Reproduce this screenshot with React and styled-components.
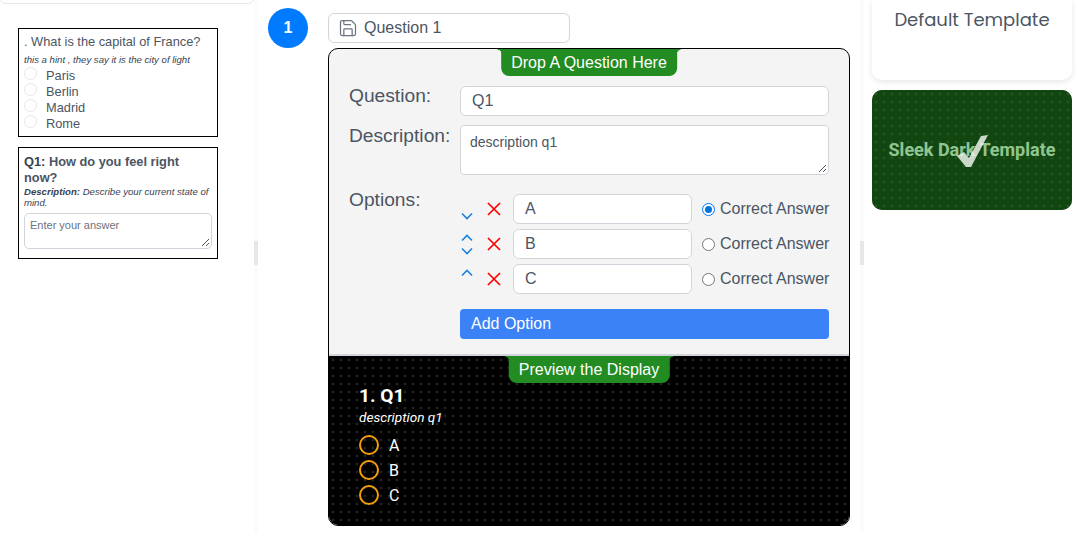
import React from "react";
import styled, { createGlobalStyle } from "styled-components";
import { Save } from "lucide-react";

const Global = createGlobalStyle`
  html, body { margin: 0; padding: 0; height: 533px; overflow: hidden; background: #fff; }
  * { box-sizing: border-box; }
  body { font-family: "Liberation Sans", Arial, sans-serif; color: #4b5563; }
`;
const Page = styled.div`
  display: grid; grid-template-columns: 254px 4px 602px 4px 217px; width: 1081px; height: 533px; overflow: hidden;
`;
const Left = styled.aside`
  padding: 28px 0 0 18px; display: flex; flex-direction: column; gap: 10px; position: relative;
  &::before { content: ""; position: absolute; left: 0; top: -7px; width: 252px; height: 9px; border: 1px solid #e5e7eb; border-radius: 6px; }
`;
const Gutter = styled.div`
  background: #fafbfd; padding-top: 241px;
  &::after { content: ""; display: block; width: 100%; height: 24px; background: #e5e7eb; }
`;
const PreviewCard = styled.section`
  width: 200px; border: 1px solid #000; padding: 5px 5px ${p => p.$bottom || 5}px; color: #4b5563; overflow: hidden;
`;
const QTitle = styled.div`
  font-size: 12.8px; line-height: 16px; color: #4b5563;
  ${p => p.$bold ? "font-weight: 700; margin-top: 1px; padding-right: 12px;" : ""}
`;
const Strong = styled.b`font-weight: 700; color: ${p => p.$dark ? "#374151" : "inherit"};`;
const Hint = styled.div`font-size: 9.6px; line-height: 11px; font-style: italic; color: #374151; margin: ${p => p.$flush ? 0 : "4px 0 2px"};`;
const PRow = styled.label`display: flex; align-items: center; height: 16px; font-size: 12.8px;`;
const PRadio = styled.span`width: 13px; height: 13px; border-radius: 50%; background: #fff; border: 1px solid #e5e7eb; margin-right: 9px; margin-top: -3px;`;
const PreviewTextarea = styled.div`
  height: 36px; margin-top: 5px; border: 1px solid #d1d5db; border-radius: 5px; font-size: 11px; padding: 5px; line-height: 13px; position: relative; color: #6b7280;
`;
const Grip = styled.svg`position: absolute; right: 1px; bottom: 1px; width: 9px; height: 9px;`;
const Resize = () => <Grip viewBox="0 0 9 9"><path d="M1 8 8 1M5 8 8 5" stroke="#555" strokeWidth="1" fill="none" /></Grip>;

const Center = styled.main`padding: 13px 0 0 10px; display: flex; gap: 20px; align-items: flex-start;`;
const Badge = styled.div`
  width: 40px; height: 40px; margin-top: -5px; flex: none; border-radius: 50%; background: #007bff; color: #fff; font-weight: 700; font-size: 16px; display: flex; align-items: center; justify-content: center;
`;
const Col = styled.div`width: 522px; display: flex; flex-direction: column; gap: 5px;`;
const NameBar = styled.div`
  width: 242px; height: 30px; border: 1px solid #d1d5db; border-radius: 6px; display: flex; align-items: center; gap: 6px; padding-left: 9px; font-size: 16px; color: #4b5563; background: #fff;
  svg { color: #6b7280; }
`;
const Editor = styled.div`
  width: 522px; height: 478px; border: 1px solid #000; border-radius: 10px; overflow: hidden; display: flex; flex-direction: column; background: #f4f4f4;
`;
const Form = styled.div`height: 307px; position: relative; padding: 37px 20px 0 20px; display: flex; flex-direction: column; border-bottom: 2px solid #d1d5db;`;
const Tab = styled.div`
  position: absolute; top: 0; left: 50%; transform: translateX(-50%); height: 27px; padding: 0 10px; background: #228b22; color: #fff; font-family: "Liberation Sans", Arial, sans-serif; font-size: 16px; display: flex; align-items: center; white-space: nowrap; border-radius: 0 0 8px 8px;
  &::before, &::after { content: ""; position: absolute; top: 0; width: 6px; height: 6px; }
  &::before { left: -5px; background: radial-gradient(circle at 0 100%, transparent 5.5px, #228b22 6px); }
  &::after { right: -5px; background: radial-gradient(circle at 100% 100%, transparent 5.5px, #228b22 6px); }
`;
const FieldRow = styled.div`display: grid; grid-template-columns: 111px 1fr; align-items: start; margin-top: ${p => p.$gap || 0}px;`;
const Label = styled.div`font-size: 19.2px; line-height: 20px; color: #4b5563; padding-top: ${p => p.$top || 0}px; white-space: nowrap;`;
const TextInput = styled.div`
  height: 30px; border: 1px solid #d1d5db; border-radius: 6px; background: #fff; font-size: 16px; display: flex; align-items: center; padding-left: 11px; color: #4b5563;
`;
const TextArea = styled.div`
  height: 50px; border: 1px solid #d1d5db; border-radius: 4px; background: #fff; font-size: 14px; line-height: 16px; padding: 8px 9px; position: relative; color: #4b5563;
`;
const Options = styled.div`display: flex; flex-direction: column; gap: 5px; padding-top: 9px;`;
const OptionRow = styled.div`display: flex; align-items: center; height: 30px;`;
const Arrows = styled.div`
  width: 14px; padding-left: 1px; margin-right: 13px; height: 26px; display: flex; flex-direction: column; justify-content: ${p => p.$only === "down" ? "flex-end" : "space-between"}; color: #1a82dc;
`;
const Slot = styled.svg`display: block; width: 12px; height: 8px; margin: 2.5px 0; fill: none; stroke: currentColor; stroke-width: 1.6;`;
const Chevron = ({ up }) => <Slot viewBox="0 0 12 8"><path d={up ? "M1 6.5 6 1.5 11 6.5" : "M1 1.5 6 6.5 11 1.5"} /></Slot>;
const Del = styled.svg`width: 14px; height: 14px; margin-right: 12px; flex: none; fill: none; stroke: #f00; stroke-width: 1.7;`;
const OptInput = styled(TextInput)`width: 179px; margin-right: 10px;`;
const Correct = styled.label`display: flex; align-items: center; font-size: 16px; color: #4b5563; white-space: nowrap; gap: 5px;`;
const Radio = styled.span`
  width: 13px; height: 13px; border-radius: 50%; border: 1px solid ${p => p.$on ? "#0075ff" : "#767676"}; background: #fff; display: flex; align-items: center; justify-content: center; margin-top: 1px;
  &::after { content: ""; width: 7px; height: 7px; border-radius: 50%; background: ${p => p.$on ? "#0075d9" : "transparent"}; }
`;
const AddBtn = styled.div`
  height: 30px; margin: 15px 0 0 111px; background: #3b82f6; border-radius: 4px; color: #fff; font-size: 16px; display: flex; align-items: center; padding-left: 11px;
`;
const dots = "radial-gradient(circle, rgba(255,255,255,.13) 1.3px, transparent 1.7px)";
const Dark = styled.div`
  flex: 1; position: relative; background-color: #000; background-image: ${dots}; background-size: 8px 8px; padding: 29px 30px 0; color: #fff; font-family: Roboto, sans-serif;
`;
const DarkTitle = styled.div`font-size: 19.2px; line-height: 22px; font-weight: 700; color: #fff;`;
const DarkDesc = styled.div`font-size: 13.6px; line-height: 16px; font-style: italic; margin-top: 2px; color: #fff;`;
const DarkList = styled.div`display: flex; flex-direction: column; gap: 5px; margin-top: 10px;`;
const DarkOption = styled.div`display: flex; align-items: center; gap: 10px; font-size: 16px; height: 20px;`;
const Ring = styled.span`width: 20px; height: 20px; border-radius: 50%; border: 2px solid #f59e0b;`;

const Right = styled.aside`padding-left: 8px; display: flex; flex-direction: column; gap: 10px;`;
const Template = styled.div`
  width: 200px; height: 80px; border-radius: 0 0 10px 10px; background: #fff; box-shadow: 0 2px 6px rgba(0,0,0,.1); font-family: Poppins, "Open Sans", sans-serif; font-size: 18px; color: #4b5563; text-align: center; padding-top: 6px; line-height: 27px;
`;
const DarkTemplate = styled.div`
  position: relative; width: 200px; height: 120px; padding-bottom: 2px; border-radius: 10px; background-color: #000; background-image: ${dots}; background-size: 8px 8px; display: flex; align-items: center; justify-content: center; font: 700 18px Roboto, sans-serif; color: #fff; overflow: hidden;
  &::after { content: ""; position: absolute; inset: 0; background: rgba(34,139,34,.5); }
`;
const Tick = styled.svg`position: absolute; left: 85px; top: 45px; width: 31px; height: 32px; z-index: 2;`;

const opts = [
  { t: "A", down: true, on: true },
  { t: "B", down: true, up: true },
  { t: "C", up: true },
];

export default function App() {
  return (
    <Page>
      <Global />
      <Left>
        <PreviewCard>
          <QTitle>. What is the capital of France?</QTitle>
          <Hint>this a hint , they say it is the city of light</Hint>
          {["Paris", "Berlin", "Madrid", "Rome"].map(o => <PRow key={o}><PRadio />{o}</PRow>)}
        </PreviewCard>
        <PreviewCard $bottom={9}>
          <QTitle $bold><Strong $dark>Q1:</Strong> How do you feel right now?</QTitle>
          <Hint $flush><Strong>Description:</Strong> Describe your current state of mind.</Hint>
          <PreviewTextarea>Enter your answer<Resize /></PreviewTextarea>
        </PreviewCard>
      </Left>
      <Gutter />
      <Center>
        <Badge>1</Badge>
        <Col>
          <NameBar><Save size={20} strokeWidth={1.5} />Question 1</NameBar>
          <Editor>
            <Form>
              <Tab>Drop A Question Here</Tab>
              <FieldRow><Label>Question:</Label><TextInput>Q1</TextInput></FieldRow>
              <FieldRow $gap={9}><Label $top={1}>Description:</Label><TextArea>description q1<Resize /></TextArea></FieldRow>
              <FieldRow $gap={10}>
                <Label $top={5}>Options:</Label>
                <Options>
                  {opts.map(o => (
                    <OptionRow key={o.t}>
                      <Arrows $only={o.up && o.down ? "both" : o.up ? "up" : "down"}>
                        {o.up && <Chevron up />}
                        {o.down && <Chevron />}
                      </Arrows>
                      <Del viewBox="0 0 14 14"><path d="M1 1 13 13M13 1 1 13" /></Del>
                      <OptInput>{o.t}</OptInput>
                      <Correct><Radio $on={o.on} />Correct Answer</Correct>
                    </OptionRow>
                  ))}
                </Options>
              </FieldRow>
              <AddBtn>Add Option</AddBtn>
            </Form>
            <Dark>
              <Tab>Preview the Display</Tab>
              <DarkTitle>1. Q1</DarkTitle>
              <DarkDesc>description q1</DarkDesc>
              <DarkList>
                {["A", "B", "C"].map(o => <DarkOption key={o}><Ring />{o}</DarkOption>)}
              </DarkList>
            </Dark>
          </Editor>
        </Col>
      </Center>
      <Gutter />
      <Right>
        <Template>Default Template</Template>
        <DarkTemplate>
          Sleek Dark Template
          <Tick viewBox="0 0 31 32"><path d="M0 21 L7 17 L12 23 L24 1 L31 0 L14 32 L9 32 Z" fill="rgba(235,242,235,.85)" /></Tick>
        </DarkTemplate>
      </Right>
    </Page>
  );
}
